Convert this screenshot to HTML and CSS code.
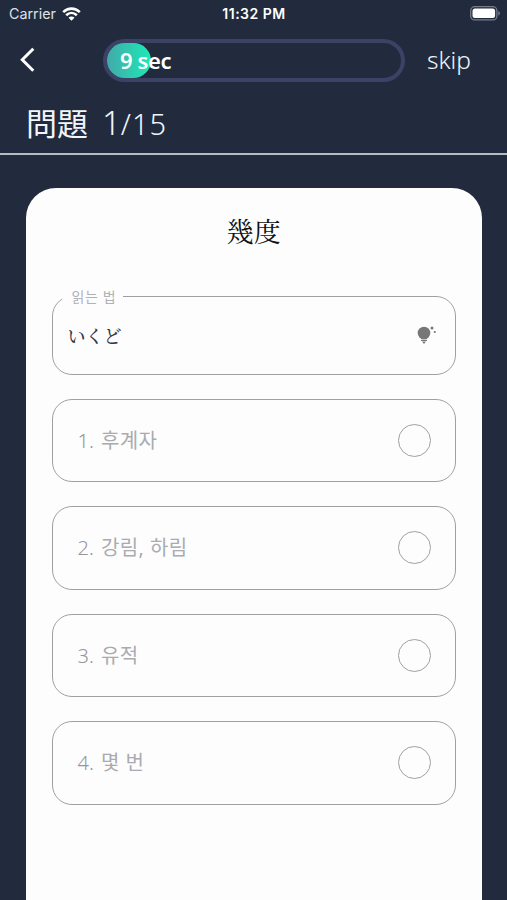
FILE: index.html
```html
<!DOCTYPE html>
<html lang="ko">
<head>
<meta charset="utf-8">
<title>Quiz</title>
<link rel="stylesheet" href="styles.css">
</head>
<body>
<div class="status">
  <div class="carrier"><span>Carrier</span>
    <svg class="wifi" width="19" height="14" viewBox="0 0 19 14" fill="none" stroke="#fff" stroke-width="2.6"><path d="M1.2 5.1C6 .5 13 .5 17.8 5.1"/><path d="M4.2 8.2C7.3 5.3 11.7 5.3 14.8 8.2"/><path d="M9.5 13.8 6.5 10.8C8.2 9.1 10.8 9.1 12.5 10.8Z" fill="#fff" stroke="none"/></svg>
  </div>
  <div class="clock">11:32 PM</div>
  <svg class="battery" width="31" height="15" viewBox="0 0 31 15"><rect x=".7" y=".7" width="26.2" height="13.2" rx="4" fill="none" stroke="#777c89" stroke-width="1.3"/><rect x="2.5" y="2.5" width="22.6" height="9.6" rx="2.5" fill="#fff"/><path d="M28.3 5v4.6c2.2-.9 2.2-3.7 0-4.6Z" fill="#777c89"/></svg>
</div>
<header class="nav">
  <svg class="back" width="16" height="26" viewBox="0 0 16 26" fill="none" stroke="#fff" stroke-width="3"><path d="M13.3 1.8 2.3 12.8l11 11"/></svg>
  <div class="timer"><div class="fill"></div><span class="time">9 sec</span></div>
  <span class="skip">skip</span>
</header>
<h1 class="progress"><span class="label">問題</span><span class="current">1</span><span class="total">/15</span></h1>
<main class="card">
  <h2 class="word">幾度</h2>
  <fieldset class="reading">
    <legend>읽는 법</legend>
    <span class="kana">いくど</span>
    <svg class="hint" width="20" height="20" viewBox="0 0 20 20" fill="#777"><circle cx="7" cy="8" r="6.3"/><path d="M3.5 11h7l-.8 3H4.3ZM4 14.7h6v1.2H4ZM5.2 16.5h3.6L7.6 18.4H6.4Z"/><circle cx="15" cy="3" r="1.5"/><circle cx="17.8" cy="7" r="1.1"/></svg>
  </fieldset>
  <div class="option"><span class="answer">1. <b>후계자</b></span><i class="radio"></i></div>
  <div class="option"><span class="answer">2. <b>강림, 하림</b></span><i class="radio"></i></div>
  <div class="option"><span class="answer">3. <b>유적</b></span><i class="radio"></i></div>
  <div class="option"><span class="answer">4. <b>몇 번</b></span><i class="radio"></i></div>
</main>
</body>
</html>
```
FILE: styles.css
```css
* { box-sizing: border-box; }
body {
  margin: 0;
  height: 900px;
  overflow: hidden;
  display: flex;
  flex-direction: column;
  background: #212b3d;
  color: #f2f5fa;
  font-family: "Noto Sans", "Noto Sans CJK KR", sans-serif;
}
.status {
  height: 28px;
  flex: none;
  display: grid;
  grid-template-columns: 1fr auto 1fr;
  align-items: center;
  padding: 0 6px 0 7px;
  font: 500 14px/28px Inter, sans-serif;
}
.carrier { display: flex; align-items: center; gap: 6px; padding-left: 2px; font-weight: 400; font-size: 14.3px; color: #dde1e8; }
.clock { font-weight: 600; font-size: 14px; letter-spacing: .5px; color: #fff; }
.battery { justify-self: end; margin-top: -1px; }
.nav { height: 64px; flex: none; display: flex; align-items: center; padding-left: 20px; }
.back { flex: none; }
.timer {
  position: relative;
  flex: none;
  width: 302px;
  height: 43px;
  margin-left: 67px;
  padding-left: 13px;
  border: 4px solid #3b4265;
  border-radius: 22px;
  display: flex;
  align-items: center;
}
.fill {
  position: absolute;
  left: 0;
  top: 0;
  width: 44px;
  height: 35px;
  border-radius: 18px;
  background: linear-gradient(90deg, #43a9aa, #1ce9b6);
}
.time { position: relative; font-size: 22px; font-weight: 600; letter-spacing: -.4px; line-height: 30px; color: #fff; }
.skip { margin-left: 22px; font-size: 24.5px; font-weight: 300; line-height: 34px; }
.progress {
  height: 62.5px;
  flex: none;
  margin: 0;
  padding: 9px 0 0 26px;
  border-bottom: 2px solid #b5bac3;
  display: flex;
  align-items: baseline;
  font-weight: 300;
  line-height: 42px;
}
.label { font-family: "Noto Sans CJK JP", sans-serif; font-size: 31px; font-weight: 400; }
.current { margin-left: 14px; font-size: 33px; }
.total { font-size: 29px; letter-spacing: 1px; }
.card {
  flex: 1;
  margin: 33.5px 25.5px 0 26px;
  padding: 22px 25.5px 0 25.5px;
  border-radius: 30px 30px 0 0;
  background: #fdfdfd;
}
.word {
  margin: 0 0 36.5px;
  height: 42px;
  text-align: center;
  color: #111;
  font: 400 27px/41px "Noto Serif CJK JP", "Noto Serif CJK SC", "Noto Sans CJK JP", serif;
}
.reading {
  height: 86px;
  min-width: 0;
  margin: 0 0 24px;
  padding: 0 18px 9px 15px;
  border: 1.5px solid #a0a0a3;
  border-radius: 20px;
  display: flex;
  align-items: center;
  justify-content: space-between;
}
legend { margin-left: -6px; padding: 0 7px 0 10px; font-size: 14px; font-weight: 400; letter-spacing: .6px; line-height: 16px; color: #b0b1b6; }
.kana { font: 500 18px/26px "Noto Serif CJK JP", "Noto Sans CJK JP", serif; color: #333641; }
.option {
  height: 83.5px;
  margin-bottom: 24px;
  padding: 1px 24px 0 25px;
  border: 1.5px solid #a0a0a3;
  border-radius: 20px;
  display: flex;
  align-items: center;
  justify-content: space-between;
}
.answer { font-size: 20px; font-weight: 300; line-height: 30px; color: #94969d; }
.answer b { margin-left: 2px; font-weight: 400; letter-spacing: .4px; color: #a9abb0; }
.radio { width: 33px; height: 33px; margin-top: -1px; border: 1.5px solid #a0a0a3; border-radius: 50%; }
```
